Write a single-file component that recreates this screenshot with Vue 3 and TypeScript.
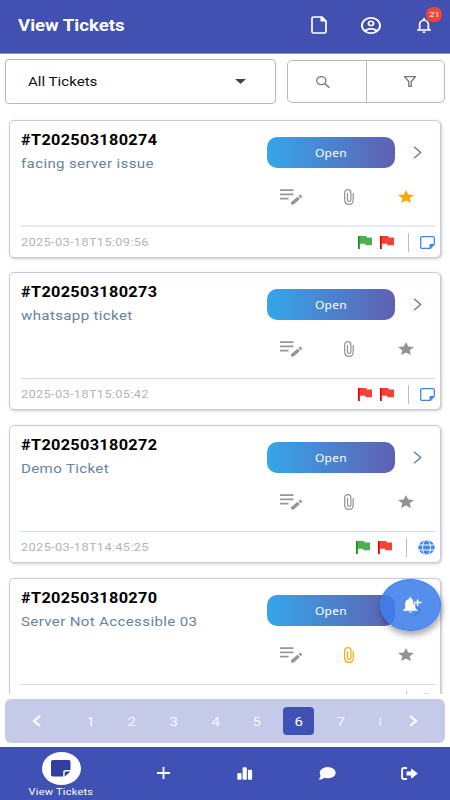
<script setup lang="ts">
import { ref } from 'vue'

interface Ticket {
  id: string
  subject: string
  time: string
  flags: string[]
  source: 'note' | 'web'
  starred?: boolean
  attached?: boolean
}

const tickets: Ticket[] = [
  { id: '#T202503180274', subject: 'facing server issue', time: '2025-03-18T15:09:56', flags: ['green', 'red'], source: 'note', starred: true },
  { id: '#T202503180273', subject: 'whatsapp ticket', time: '2025-03-18T15:05:42', flags: ['red', 'red'], source: 'note' },
  { id: '#T202503180272', subject: 'Demo Ticket', time: '2025-03-18T14:45:25', flags: ['green', 'red'], source: 'web' },
  { id: '#T202503180270', subject: 'Server Not Accessible 03', time: '', flags: [], source: 'web', attached: true },
]
const pages = [1, 2, 3, 4, 5, 6, 7, 8]
const current = ref(6)
</script>

<template>
  <div class="app">
    <header class="bar">
      <h1 class="wide title">View Tickets</h1>
      <svg class="i-file" viewBox="0 0 16 18" preserveAspectRatio="none"><path d="M2.500 1H11L15 5V15.500Q15 17 13.500 17H2.500Q1 17 1 15.500V2.500Q1 1 2.500 1Z" fill="none" stroke="#fff" stroke-width="1.700" /><path d="M9.500 1V5.500H15L11 1Z" fill="#fff" /></svg>
      <svg class="i-user" viewBox="2 2 20 20" preserveAspectRatio="none"><path fill="#fff" d="M12 2C6.480 2 2 6.480 2 12s4.480 10 10 10 10-4.480 10-10S17.520 2 12 2zM7.350 18.500C8.660 17.560 10.260 17 12 17s3.340.56 4.650 1.500C15.340 19.440 13.740 20 12 20s-3.340-.56-4.650-1.500zm10.790-1.380C16.450 15.800 14.320 15 12 15s-4.450.8-6.140 2.120C4.700 15.730 4 13.950 4 12c0-4.420 3.580-8 8-8s8 3.580 8 8c0 1.950-.7 3.730-1.860 5.120zM12 6c-1.930 0-3.500 1.570-3.500 3.500S10.070 13 12 13s3.500-1.570 3.500-3.500S13.930 6 12 6zm0 5c-.83 0-1.500-.67-1.500-1.500S11.170 8 12 8s1.500.67 1.500 1.500S12.830 11 12 11z" /></svg>
      <div class="bell">
        <svg class="i-bell" viewBox="4 2.500 16 19.500" preserveAspectRatio="none"><path fill="#fff" d="M12 22c1.100 0 2-.9 2-2h-4c0 1.100.9 2 2 2zm6-6v-5c0-3.070-1.630-5.640-4.500-6.320V4c0-.83-.67-1.500-1.500-1.500s-1.500.67-1.500 1.500v.68C7.640 5.360 6 7.920 6 11v5l-2 2v1h16v-1l-2-2zm-2 1H8v-6c0-2.480 1.510-4.500 4-4.500s4 2.020 4 4.500v6z" /></svg>
        <span class="badge"><span class="wide mid">21</span></span>
      </div>
    </header>

    <div class="tools">
      <div class="select">
        <span class="wide">All Tickets</span>
        <svg class="caret" viewBox="0 0 10 5" preserveAspectRatio="none"><path d="M0 0H10L5 5Z" fill="#444" /></svg>
      </div>
      <div class="group">
        <button type="button"><svg class="i-search" viewBox="0 0 14 12" preserveAspectRatio="none"><g fill="none" stroke="#777"><ellipse cx="5.300" cy="4.600" rx="4.600" ry="4" stroke-width="1.300" /><path d="M8.700 7.500L13.300 11.500" stroke-width="1.600" /></g></svg></button>
        <button type="button"><svg class="i-filter" viewBox="0 0 12 11" preserveAspectRatio="none"><path d="M.7.700H11.300L7.200 5.500V10.300H4.800V5.500Z" fill="none" stroke="#777" stroke-width="1.300" /></svg></button>
      </div>
    </div>

    <main class="list">
      <article v-for="t in tickets" :key="t.id" class="card">
        <div class="top">
          <div class="info">
            <div class="wide id">{{ t.id }}</div>
            <div class="wide subject">{{ t.subject }}</div>
          </div>
          <div class="side">
            <div class="row">
              <button type="button" class="open"><span class="wide mid">Open</span></button>
              <svg class="chev" viewBox="0 0 9 13"><path d="M1 .8L7.700 6.500L1 12.200" fill="none" stroke="#67849c" stroke-width="1.500" /></svg>
            </div>
            <div class="row acts">
              <svg class="i-edit" viewBox="0 0 22 16" fill="#969696"><path d="M0 .3H13.500V2H0ZM0 4.500H13.500V6.200H0ZM0 8.800H8.500V10.500H0Z" /><path d="M11 13.200L17.500 7.700L19.900 10L13.800 15.500H11ZM18.400 7L19.900 5.800Q20.400 5.500 20.900 5.900L21.900 6.900Q22.200 7.400 21.800 7.900L20.700 9.200Z" /></svg>
              <svg class="i-clip" viewBox="0 0 10 16" :class="{ on: t.attached }"><path d="M9.200 4V11.200Q9.200 15.300 5 15.300Q.7 15.300.7 11.200V3.600Q.7.700 3.900.700Q6.900.700 6.900 3.600V10.800Q6.900 12.500 5.200 12.500Q3.500 12.500 3.500 10.800V4" fill="none" stroke-width="1.200" /></svg>
              <svg class="i-star" viewBox="2 2 20 19" preserveAspectRatio="none" :class="{ on: t.starred }"><path d="M12 17.270L18.180 21l-1.640-7.030L22 9.240l-7.190-.61L12 2 9.190 8.630 2 9.240l5.460 4.730L5.820 21z" /></svg>
            </div>
          </div>
        </div>
        <div class="foot">
          <time v-if="t.time" class="wide">{{ t.time }}</time>
          <div class="marks">
            <svg v-for="(f, i) in t.flags" :key="i" class="flag" :class="f" viewBox="5 4 15 17" preserveAspectRatio="none"><path d="M14.400 6L14 4H5v17h2v-7h5.600l.4 2h7V6z" /><path class="pole" d="M5 4H6.600V21H5Z" /></svg>
            <i class="sep"></i>
            <svg v-if="t.source === 'note'" class="i-note" viewBox="0 0 15 13"><path d="M2 .7H13Q14.300.700 14.300 2V8.200L10.200 12.300H2Q.7 12.300.7 11V2Q.7.700 2 .7Z" fill="none" stroke="#4285f4" stroke-width="1.300" /><path d="M9.500 12.600V9.200Q9.500 8 10.700 8H14.600Z" fill="#4285f4" /></svg>
            <svg v-else class="i-globe" viewBox="0 0 17 15"><ellipse cx="8.500" cy="7.500" rx="8.200" ry="7.200" fill="#4285f4" /><g fill="none" stroke="#fff" stroke-width="1"><path d="M.5 5H16.500M.5 10H16.500" /><ellipse cx="8.500" cy="7.500" rx="3.900" ry="7.700" /></g></svg>
          </div>
        </div>
      </article>
    </main>

    <button type="button" class="fab">
      <svg class="i-alert" viewBox="0 0 19 16" fill="#fff"><path d="M0 13L2.200 11.200V6.700Q2.200 3.200 6 2V1.300Q6 .2 7.200.2Q8.400.2 8.400 1.300V2Q9.300 2.300 10.100 2.900V6.700H12.300V11.200L14.600 13V13.700H0Z" /><path d="M5.800 14.400H9Q8.700 15.800 7.400 15.800Q6 15.800 5.800 14.400Z" /><path d="M13.800 2.400H15.400V4.700H18.600V6.300H15.400V9H13.800V6.300H10.800V4.700H13.800Z" /></svg>
    </button>

    <nav class="pager">
      <svg class="arrow" viewBox="0 0 9 12"><path d="M8 1L2 6L8 11" /></svg>
      <div class="pages">
        <span v-for="p in pages" :key="p" class="page" :class="{ active: p === current }"><span class="wide mid">{{ p }}</span></span>
      </div>
      <svg class="arrow next" viewBox="0 0 9 12"><path d="M1 1L7 6L1 11" /></svg>
    </nav>

    <footer class="tabs">
      <div class="tab first">
        <span class="disc"><svg viewBox="0 0 20 17"><path d="M1.800 0H17.700Q19.500 0 19.500 1.800V10H14.500Q12.200 10 12.200 12V16.500H1.800Q0 16.500 0 14.700V1.800Q0 0 1.800 0Z" fill="#303f9f" /><path d="M13.700 16.500V12.700Q13.700 11.500 15 11.500H19.500Z" fill="#303f9f" /></svg></span>
        <span class="wide mid label">View Tickets</span>
      </div>
      <div class="tab"><svg width="13" height="12" viewBox="0 0 13 12"><path d="M6.500 0V12M0 6H13" stroke="#fff" stroke-width="1.800" /></svg></div>
      <div class="tab"><svg width="16" height="13" viewBox="0 0 16 13" fill="#fff"><rect x=".3" y="6" width="4.200" height="6.800" rx="1" /><rect x="5.600" y=".2" width="4.200" height="12.600" rx="1" /><rect x="10.900" y="2.800" width="4.200" height="10" rx="1" /></svg></div>
      <div class="tab"><svg width="17" height="13" viewBox="0 0 17 13" fill="#fff"><ellipse cx="8.700" cy="5.700" rx="8" ry="5.600" /><path d="M1.500 7.500Q1.700 10.500.1 12Q-.1 12.700.8 12.700Q3.700 12.500 5.300 10.800Z" /></svg></div>
      <div class="tab"><svg width="17" height="13" viewBox="0 0 17 13"><path d="M6 1H3Q1.100 1 1.100 3V10Q1.100 12 3 12H6" fill="none" stroke="#fff" stroke-width="1.900" /><path d="M5.500 5Q5.500 4.400 6.100 4.400H10V2.300Q10 1.300 10.900 1.900L16.200 5.900Q16.800 6.500 16.200 7.100L10.900 11.200Q10 11.700 10 10.700V8.600H6.100Q5.500 8.600 5.500 8Z" fill="#fff" /></svg></div>
    </footer>
  </div>
</template>

<style>
body { margin: 0; background: #fff; }
</style>

<style scoped>
* { box-sizing: border-box; }
.app { position: relative; width: 450px; height: 800px; overflow: hidden; display: flex; flex-direction: column; background: #fff; font-family: Roboto, sans-serif; }
svg { display: block; flex: none; }
button { border: 0; padding: 0; background: none; font-family: inherit; }
.wide { display: block; transform: scaleX(1.16); transform-origin: 0 50%; white-space: nowrap; }
.mid { transform-origin: 50% 50%; }
.bar { height: 54px; flex: none; background: #4250b1; border-bottom: 1px solid #8c93c4; display: flex; align-items: center; padding: 0 19px 3px 18px; color: #fff; }
.title { margin: 2px auto 0 0; font-size: 16px; line-height: 20px; font-weight: 700; }
.i-file { width: 16px; height: 18px; margin-right: 34px; }
.i-user { width: 20px; height: 17px; margin-right: 36px; }
.bell { position: relative; width: 14px; }
.i-bell { width: 14px; height: 15px; }
.badge { position: absolute; left: 9px; top: -11px; width: 16px; height: 15px; border-radius: 7px; background: #f44336; font-size: 8px; display: flex; align-items: center; justify-content: center; }
.tools { display: flex; flex: none; height: 56px; padding: 5px 5px 0; gap: 11px; }
.select { width: 271px; height: 45px; border: 1px solid #b8b8b8; border-radius: 4px; display: flex; align-items: center; justify-content: space-between; padding: 0 29px 0 22px; font-size: 13px; color: #111; }
.caret { width: 11px; height: 5px; }
.group { width: 158px; height: 43px; margin-top: 1px; border: 1px solid #b9b9bd; border-radius: 5px; display: flex; }
.group button { flex: 1; display: flex; align-items: center; justify-content: center; }
.group button + button { border-left: 1px solid #b9b9bd; padding-left: 8px; }
.group button:first-child { padding-right: 9px; }
.i-search { width: 14px; height: 12px; }
.i-filter { width: 12px; height: 11px; }
.list { height: 584px; flex: none; overflow: hidden; padding: 9.500px 9px 0; display: flex; flex-direction: column; gap: 14.900px; }
.card { flex: none; height: 138px; border: 1px solid #c5cae9; border-radius: 5px; box-shadow: 1px 1px 3px rgba(0, 0, 0, .2); padding: 0 5px 0 11px; background: #fff; }
.top { height: 106px; border-bottom: 1px solid #cfdaf6; display: flex; }
.card:first-child .top { border-bottom: 2px solid #e4e9f8; }
.info { flex: 1; padding-top: 10px; }
.id { font-size: 14px; line-height: 18px; font-weight: 700; letter-spacing: .3px; color: #000; }
.subject { margin-top: 6px; font-size: 13px; line-height: 18px; letter-spacing: .3px; color: #67849c; }
.side { width: 168px; padding-top: 16px; }
.row { display: flex; align-items: center; }
.open { width: 128px; height: 31px; border-radius: 10px; background: linear-gradient(90deg, #35a6ea, #5f60b2); color: #fff; font-family: "Noto Sans", sans-serif; font-size: 11px; letter-spacing: .3px; }
.open .mid { transform: scaleX(1.090); }
.chev { width: 9px; height: 13px; margin-left: 18px; }
.acts { margin-top: 21px; padding-left: 13px; height: 16px; }
.i-edit { width: 22px; height: 16px; }
.i-clip { width: 10px; height: 16px; margin-left: 42px; stroke: #919191; }
.i-clip.on { stroke: #f5a50b; }
.i-star { width: 16px; height: 13px; margin: 0 0 1px 44px; fill: #929292; }
.i-star.on { fill: #faa80d; }
.foot { height: 31px; display: flex; align-items: center; }
time { font-size: 11px; line-height: 14px; letter-spacing: .3px; color: #b4b4b4; padding-top: 1px; }
.marks { margin-left: auto; display: flex; align-items: center; height: 20px; }
.flag { width: 14px; height: 13px; margin-right: 8px; }
.flag.green { fill: #4caf50; }
.flag.red { fill: #f44336; }
.pole { fill: #159315; }
.flag.red .pole { fill: #e80000; }
.sep { width: 1px; height: 19px; margin: 0 11px 0 6px; background: #bdbdbd; }
.i-note { width: 15px; height: 13px; }
.i-globe { width: 17px; height: 15px; }
.fab { position: absolute; left: 380px; top: 579px; width: 61px; height: 52px; border-radius: 50%; background: rgba(62, 126, 234, .88); border: 1px solid #3b82f5; box-shadow: 1px 4px 6px rgba(0, 0, 0, .35); display: flex; align-items: center; justify-content: center; padding-left: 4px; }
.i-alert { width: 19px; height: 16px; }
.pager { flex: none; width: 440px; height: 44px; margin: 5px 5px 4px; border-radius: 6px; background: #c5cae9; display: flex; align-items: center; padding: 0 27px; }
.arrow { width: 9px; height: 12px; fill: none; stroke: #fff; stroke-width: 2.100; }
.next { margin-left: auto; }
.pages { width: 340px; padding-left: 28.500px; display: flex; overflow: hidden; }
.page { flex: none; width: 41.700px; height: 28px; display: flex; align-items: center; justify-content: center; color: rgba(255, 255, 255, .9); font-size: 13px; }
.page.active { width: 31px; margin: 0 5.350px; background: #3f51b5; border-radius: 4px; color: #fff; }
.tabs { flex: none; height: 53px; background: #3f51b5; display: flex; }
.tab { width: 81.800px; flex: none; display: flex; align-items: center; justify-content: center; padding-bottom: 1px; }
.first { width: 122.800px; flex-direction: column; justify-content: flex-start; padding-top: 5px; }
.disc { width: 39px; height: 33px; border-radius: 50%; background: #fff; display: flex; align-items: center; justify-content: center; flex: none; }
.disc svg { width: 20px; height: 17px; }
.label { font-size: 9.500px; line-height: 12px; letter-spacing: .2px; color: #fff; margin-top: 1px; }
</style>
